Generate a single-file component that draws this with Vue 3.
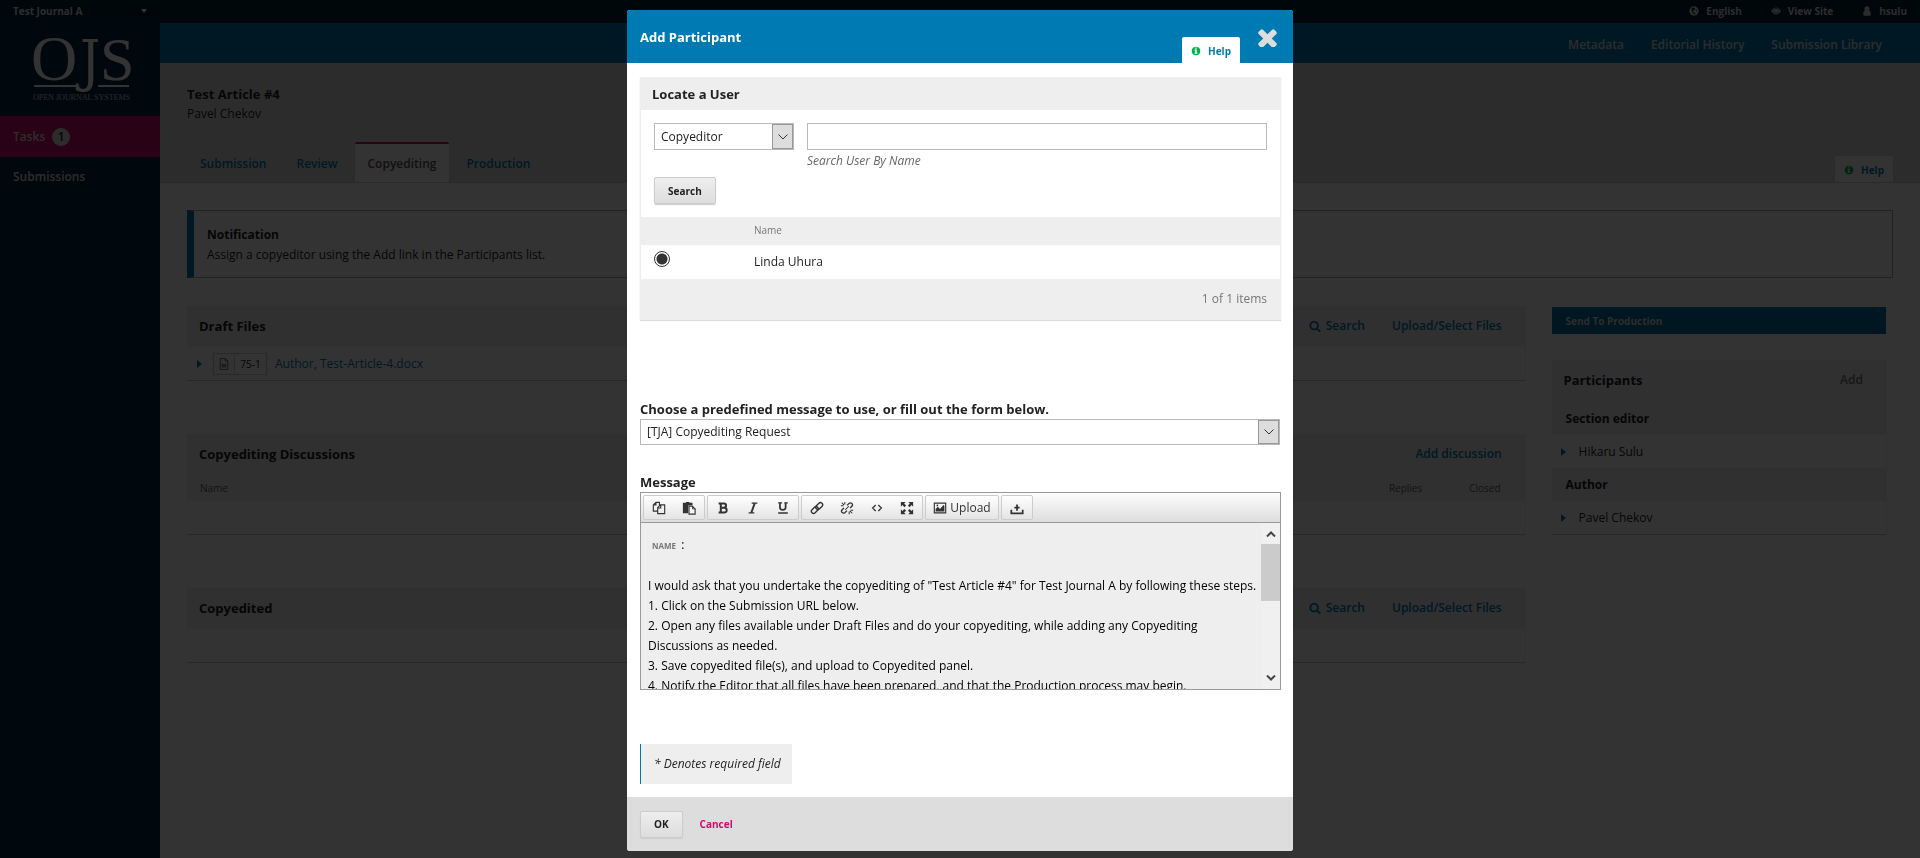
<script setup>
import { ref } from 'vue'

const icons = {
  times: 'M1490 1322q0 40-28 68l-136 136q-28 28-68 28t-68-28l-294-294-294 294q-28 28-68 28t-68-28l-136-136q-28-28-28-68t28-68l294-294-294-294q-28-28-28-68t28-68l136-136q28-28 68-28t68 28l294 294 294-294q28-28 68-28t68 28l136 136q28 28 28 68t-28 68l-294 294 294 294q28 28 28 68z',
  info: 'M1152 1376v-160q0-14-9-23t-23-9h-96v-512q0-14-9-23t-23-9h-320q-14 0-23 9t-9 23v160q0 14 9 23t23 9h96v320h-96q-14 0-23 9t-9 23v160q0 14 9 23t23 9h448q14 0 23-9t9-23zm-128-896v-160q0-14-9-23t-23-9h-192q-14 0-23 9t-9 23v160q0 14 9 23t23 9h192q14 0 23-9t9-23zm640 416q0 209-103 385.5t-279.5 279.5-385.5 103-385.5-103-279.5-279.5-103-385.5 103-385.5 279.5-279.5 385.5-103 385.5 103 279.5 279.5 103 385.5z',
  search: 'M1216 832q0-185-131.5-316.5t-316.5-131.5-316.5 131.5-131.5 316.5 131.5 316.5 316.5 131.5 316.5-131.5 131.5-316.5zm512 832q0 52-38 90t-90 38q-54 0-90-38l-343-342q-179 124-399 124-143 0-273.5-55.5t-225-150-150-225-55.5-273.5 55.5-273.5 150-225 225-150 273.5-55.5 273.5 55.5 225 150 150 225 55.5 273.5q0 220-124 399l343 343q37 37 37 90z'
}

const roles = ['Copyeditor']
const templates = ['[TJA] Copyediting Request']
const role = ref(roles[0])
const template = ref(templates[0])
const query = ref('')
const picked = ref('linda')

const steps = [
  'I would ask that you undertake the copyediting of "Test Article #4" for Test Journal A by following these steps.',
  '1. Click on the Submission URL below.',
  '2. Open any files available under Draft Files and do your copyediting, while adding any Copyediting Discussions as needed.',
  '3. Save copyedited file(s), and upload to Copyedited panel.',
  '4. Notify the Editor that all files have been prepared, and that the Production process may begin.'
]

const participants = [
  { role: 'Section editor', name: 'Hikaru Sulu' },
  { role: 'Author', name: 'Pavel Chekov' }
]
</script>

<template>
  <div class="app">
    <header class="topbar">
      <button type="button" class="journal">Test Journal A <i class="caret"></i></button>
      <nav class="usernav">
        <a href="#">
          <svg class="ic10" viewBox="0 0 16 16"><circle cx="8" cy="8" r="7.5" fill="currentColor" /><path d="M4 4l3-2 3 2-2 3-2 1 1 2 3 1-1 3-2-2-2-3zM11 4l2 3-1 2z" fill="#002c40" /></svg>English</a>
        <a href="#">
          <svg class="ic10" viewBox="0 0 16 16"><path d="M0 8q8-11 16 0-8 11-16 0z" fill="currentColor" /><circle cx="8" cy="7.500" r="3.800" fill="none" stroke="#002c40" stroke-width="1" /></svg>View Site</a>
        <a href="#">
          <svg class="ic10" viewBox="0 0 16 16"><circle cx="8" cy="4.500" r="4" fill="currentColor" /><path d="M2 13q0-6 3-6 3 2.500 6 0 3 0 3 6 0 2.500-2 2.500H4Q2 15.500 2 13z" fill="currentColor" /></svg>hsulu</a>
      </nav>
    </header>

    <div class="frame">
      <aside class="side">
        <a href="#" class="logo">
          <svg viewBox="0 0 96 66" role="img" aria-label="Open Journal Systems">
            <g fill="#fff">
              <text x="-2" y="44" font-family="Liberation Serif, serif" font-size="64">O</text>
              <text x="47" y="44" font-family="DejaVu Serif Condensed, DejaVu Serif, serif" font-size="56">J</text>
              <text x="67" y="44" font-family="Liberation Serif, serif" font-size="62">S</text>
              <path d="M1 49h43v2H1zM65 49h31v2H65z" />
              <text x="0" y="64" font-family="Liberation Serif, serif" font-size="8" opacity=".75">OPEN JOURNAL SYSTEMS</text>
            </g>
          </svg>
        </a>
        <a href="#" class="side-link tasks">Tasks <span class="count">1</span></a>
        <a href="#" class="side-link">Submissions</a>
      </aside>

      <main class="page">
        <nav class="pagenav">
          <a href="#">Metadata</a>
          <a href="#">Editorial History</a>
          <a href="#">Submission Library</a>
        </nav>
        <div class="title-area">
          <h1>Test Article #4</h1>
          <p>Pavel Chekov</p>
          <div class="tabrow">
            <nav class="tabs">
              <a href="#">Submission</a>
              <a href="#">Review</a>
              <a href="#" class="active">Copyediting</a>
              <a href="#">Production</a>
            </nav>
            <a href="#" class="help page-help"><svg class="ic10" viewBox="0 0 1792 1792"><path :d="icons.info" /></svg>Help</a>
          </div>
        </div>

        <div class="content">
          <section class="notice">
            <h2>Notification</h2>
            <p>Assign a copyeditor using the Add link in the Participants list.</p>
          </section>

          <div class="columns">
            <div class="grids">
              <section class="grid">
                <header class="grid-head">
                  <h3>Draft Files</h3>
                  <a href="#"><svg class="ic12" viewBox="0 0 1792 1792"><path :d="icons.search" /></svg>Search</a>
                  <a href="#">Upload/Select Files</a>
                </header>
                <div class="file">
                  <button type="button" class="tri" aria-label="Settings"></button>
                  <span class="badge">
                    <svg viewBox="0 0 12 14"><path d="M1.500.5h6l3 3v10h-9zM7.500.5v3h3M3.500 6.500l1 4.500 1.500-4 1.500 4 1-4.500" fill="none" stroke="#555" /></svg>
                    <b>75-1</b>
                  </span>
                  <a href="#">Author, Test-Article-4.docx</a>
                </div>
              </section>

              <section class="grid">
                <header class="grid-head">
                  <h3>Copyediting Discussions</h3>
                  <a href="#">Add discussion</a>
                </header>
                <div class="cols"><span class="grow">Name</span><span>Replies</span><span>Closed</span></div>
                <div class="blank"></div>
              </section>

              <section class="grid">
                <header class="grid-head">
                  <h3>Copyedited</h3>
                  <a href="#"><svg class="ic12" viewBox="0 0 1792 1792"><path :d="icons.search" /></svg>Search</a>
                  <a href="#">Upload/Select Files</a>
                </header>
                <div class="blank"></div>
              </section>
            </div>

            <aside class="right">
              <button type="button" class="send">Send To Production</button>
              <section class="grid people">
                <header class="grid-head"><h3>Participants</h3><a href="#" class="muted">Add</a></header>
                <template v-for="p in participants" :key="p.role">
                  <h4>{{ p.role }}</h4>
                  <div class="person"><button type="button" class="tri" aria-label="Settings"></button>{{ p.name }}</div>
                </template>
              </section>
            </aside>
          </div>
        </div>
      </main>
    </div>

    <div class="overlay">
      <div class="modal" role="dialog" aria-modal="true" aria-labelledby="modal-title">
        <header class="modal-head">
          <h2 id="modal-title">Add Participant</h2>
          <a href="#" class="help"><svg class="ic10" viewBox="0 0 1792 1792"><path :d="icons.info" /></svg>Help</a>
          <button type="button" class="close" aria-label="Close"><svg viewBox="290 290 1212 1212"><path :d="icons.times" /></svg></button>
        </header>

        <form class="modal-body" @submit.prevent>
          <section class="locate">
            <h3>Locate a User</h3>
            <div class="filters">
              <div class="select role">
                <select v-model="role" aria-label="Role"><option v-for="r in roles" :key="r">{{ r }}</option></select>
                <span class="drop"><svg viewBox="0 0 10 6"><path d="M.5.5L5 5 9.500.5" fill="none" stroke="#333" /></svg></span>
              </div>
              <div class="byname">
                <input id="user-name" v-model="query" type="text" />
                <label for="user-name">Search User By Name</label>
              </div>
            </div>
            <button type="button" class="btn search">Search</button>
            <table>
              <thead><tr><th class="pick"></th><th>Name</th></tr></thead>
              <tbody>
                <tr>
                  <td class="pick"><input id="linda" v-model="picked" type="radio" value="linda" /></td>
                  <td><label for="linda">Linda Uhura</label></td>
                </tr>
              </tbody>
            </table>
            <div class="paging">1 of 1 items</div>
          </section>

          <label class="field" for="tpl">Choose a predefined message to use, or fill out the form below.</label>
          <div class="select tpl">
            <select id="tpl" v-model="template"><option v-for="t in templates" :key="t">{{ t }}</option></select>
            <span class="drop"><svg viewBox="0 0 10 6"><path d="M.5.5L5 5 9.500.5" fill="none" stroke="#333" /></svg></span>
          </div>

          <span id="msg-label" class="field">Message</span>
          <div class="editor">
            <div class="toolbar">
              <div class="group">
                <button type="button" aria-label="Copy"><svg viewBox="0 0 16 16"><path d="M6.500 11.500h-5v-7l3-3h4V5M4.500 1.500v3h-3M6.500 7.500l3-3h5v10h-8zM10 4.500v3.500H6.500" fill="none" stroke="#333" stroke-width="1.300" /></svg></button>
                <button type="button" aria-label="Paste"><svg viewBox="0 0 16 16"><path d="M1 2h3.500V1h4v1H12v3H7v9H1z" fill="#333" /><path d="M8 6h4l3 3v6H8z" fill="#f5f5f5" stroke="#333" stroke-width="1.300" /><path d="M12 6v3h3" fill="none" stroke="#333" /></svg></button>
              </div>
              <div class="group">
                <button type="button" aria-label="Bold"><svg viewBox="0 0 16 16"><path d="M3 2.800h6q2.500 0 2.500 2.400T9 7.700H5M9 7.700q3.200 0 3.200 2.800T9 13.200H3M5.500 3v10" fill="none" stroke="#333" stroke-width="2.300" /></svg></button>
                <button type="button" aria-label="Italic"><svg viewBox="0 0 16 16"><path d="M6.500 2.500h6.500M3 13.500h6.500" fill="none" stroke="#333" stroke-width="1.400" /><path d="M10 2.500L6 13.500" fill="none" stroke="#333" stroke-width="2.200" /></svg></button>
                <button type="button" aria-label="Underline"><svg viewBox="0 0 16 16"><path d="M4.500 2v5q0 3.200 3.300 3.200T11 7V2" fill="none" stroke="#333" stroke-width="2" /><path d="M2.500 2.200H7M9.500 2.200h4M2.500 13.700h11" fill="none" stroke="#333" stroke-width="1.500" /></svg></button>
              </div>
              <div class="group">
                <button type="button" aria-label="Link"><svg viewBox="0 0 16 16"><g fill="none" stroke="#333" stroke-width="1.600"><rect x="6" y="3.300" width="9" height="5" rx="2.500" transform="rotate(-45 10.500 5.800)" /><rect x="1" y="7.800" width="9" height="5" rx="2.500" transform="rotate(-45 5.500 10.300)" /></g></svg></button>
                <button type="button" aria-label="Remove link"><svg viewBox="0 0 16 16"><g fill="none" stroke="#333" stroke-width="1.500"><path d="M8 5l2.500-2.500q1.500-1 3 .3t.3 3L11.500 8M8 11l-2.500 2.500q-1.500 1-3-.3t-.3-3L4.500 8" /><path d="M5.500 1v3M1 5.500h3M2 2l2.500 2.500M10.500 12v3M12 10.500h3M11.500 11.500L14 14M6 10l4-4" stroke-width="1.200" /></g></svg></button>
                <button type="button" aria-label="Source"><svg viewBox="0 0 16 16"><path d="M6.500 4.500L3 8l3.500 3.500M9.500 4.500L13 8l-3.500 3.500" fill="none" stroke="#333" stroke-width="1.500" /></svg></button>
                <button type="button" aria-label="Fullscreen"><svg viewBox="0 0 16 16"><path d="M1 1h5.500L4.700 2.800 7 5 5 7 2.800 4.700 1 6.500zM15 1v5.500l-1.800-1.800L11 7 9 5l2.300-2.200L9.500 1zM1 15V9.500l1.800 1.800L5 9l2 2-2.300 2.200L6.500 15zM15 15H9.500l1.800-1.800L9 11l2-2 2.200 2.300L15 9.500z" fill="#333" /></svg></button>
              </div>
              <div class="group">
                <button type="button" class="upload"><svg viewBox="0 0 16 16"><path d="M1.500 2.500h13v11h-13z" fill="none" stroke="#333" stroke-width="1.300" /><path d="M3 12V9l2.500-2.500L8 9l4-4.500 1 1V12z" fill="#333" /><circle cx="5" cy="5" r="1" fill="#333" /></svg>Upload</button>
              </div>
              <div class="group">
                <button type="button" aria-label="Download"><svg viewBox="0 0 16 16"><path d="M1.500 10v4h13v-4M8 4v7M5 7.500h6" fill="none" stroke="#333" stroke-width="2" /></svg></button>
              </div>
            </div>
            <div class="edit-area">
              <div class="text" contenteditable="true" role="textbox" aria-labelledby="msg-label">
                <p class="greet"><span class="tag">NAME</span> :</p>
                <p v-for="s in steps" :key="s">{{ s }}</p>
              </div>
              <div class="scroll">
                <svg viewBox="0 0 10 6"><path d="M1 5.500l4-4 4 4" fill="none" stroke="#444" stroke-width="2" /></svg>
                <i class="thumb"></i>
                <svg viewBox="0 0 10 6"><path d="M1 .5l4 4 4-4" fill="none" stroke="#444" stroke-width="2" /></svg>
              </div>
            </div>
          </div>

          <p class="required">* Denotes required field</p>
        </form>

        <footer class="modal-foot">
          <button type="button" class="btn">OK</button>
          <a href="#">Cancel</a>
        </footer>
      </div>
    </div>
  </div>
</template>

<style>
body { margin: 0; background: #fff; overflow: hidden; }
</style>

<style scoped>
.app {
  min-height: 100vh;
  display: flex;
  flex-direction: column;
  font: 12px/20px "Open Sans", "Noto Sans", sans-serif;
  color: #222;
}
.app *, .app *::before { box-sizing: border-box; }
h1, h2, h3, h4, p { margin: 0; font-size: 13px; line-height: 20px; }
p { font-size: 12px; }
a { color: #007ab2; text-decoration: none; }
button, input, select { font: inherit; color: inherit; margin: 0; }
svg { display: block; fill: currentColor; }
.ic10 { width: 10px; height: 10px; flex: none; }
.ic12 { width: 12px; height: 12px; flex: none; }

.topbar {
  display: flex;
  justify-content: space-between;
  align-items: center;
  height: 23px;
  padding: 0 13px 2px;
  background: #002435;
  font-size: 10px;
  font-weight: 700;
  color: #ddd;
}
.journal {
  display: flex;
  align-items: center;
  justify-content: space-between;
  width: 134px;
  padding: 0;
  border: 0;
  background: none;
}
.caret { border: 3px solid transparent; border-top: 4px solid #fff; border-bottom: 0; }
.usernav { display: flex; gap: 29px; }
.usernav a { display: flex; align-items: center; gap: 7px; color: #ddd; }

.frame { flex: 1; display: flex; }
.side { width: 160px; flex: none; background: #002c40; }
.logo { display: block; padding: 13px 31px 14px 33px; height: 93px; }
.logo svg { overflow: visible; }
.side-link {
  display: flex;
  align-items: center;
  gap: 7px;
  height: 40px;
  padding: 0 13px;
  color: #ddd;
  font-weight: 600;
}
.side-link.tasks { height: 41px; background: #d00a6c; }
.count {
  width: 18px;
  height: 18px;
  border-radius: 9px;
  background: #ddd;
  color: #222;
  text-align: center;
  line-height: 18px;
}

.page { flex: 1; min-width: 0; }
.pagenav {
  display: flex;
  justify-content: flex-end;
  align-items: center;
  gap: 27px;
  height: 40px;
  padding: 4px 38px 0;
  background: #007ab2;
  font-weight: 600;
}
.pagenav a { color: #ddd; }
.title-area { background: #ddd; padding: 21px 27px 0; border-bottom: 1px solid #d0d0d0; }
.tabrow { display: flex; justify-content: space-between; align-items: flex-end; margin-top: 18px; }
.tabs { display: flex; gap: 4px; font-weight: 600; }
.tabs a { height: 40px; padding: 12px 13px 0; }
.tabs .active {
  padding-top: 10px;
  border-top: 2px solid #d00a6c;
  border-radius: 2px 2px 0 0;
  background: #fff;
  color: #555;
}
.help {
  display: flex;
  align-items: center;
  gap: 7px;
  height: 26px;
  padding: 1px 9px 0;
  border-radius: 2px 2px 0 0;
  background: #fff;
  font-size: 10px;
  font-weight: 700;
}
.help svg { color: #00b24e; }

.content { padding: 27px; }
.notice {
  padding: 14px 13px;
  height: 68px;
  border: 1px solid #aaa;
  border-left: 7px solid #007ab2;
}
.notice h2 { font-size: 12px; }
.columns {
  display: grid;
  grid-template-columns: 4fr 1fr;
  gap: 27px;
  padding: 28px 7px 0 0;
}
.grids { display: flex; flex-direction: column; gap: 53px; }
.grid { border-bottom: 1px solid #c8c8c8; box-shadow: 1px 0 1px #eee; }
.grid-head {
  display: flex;
  align-items: center;
  gap: 27px;
  height: 41px;
  padding: 0 23px 2px 12px;
  background: #eee;
}
.grid-head h3 { flex: 1; }
.grid-head a { display: flex; align-items: center; gap: 5px; font-weight: 600; }
.grid-head .muted { color: #777; }
.file { display: flex; align-items: center; height: 33px; padding-left: 10px; }
.tri {
  width: 5px;
  height: 8px;
  padding: 0;
  border: 4px solid transparent;
  border-left: 5px solid #007ab2;
  border-right: 0;
  background: none;
}
.badge {
  display: flex;
  align-items: center;
  width: 54px;
  height: 22px;
  margin: 0 8px 0 11px;
  border: 1px solid #ccc;
}
.badge svg { width: 20px; height: 12px; }
.badge b { flex: 1; border-left: 1px solid #ccc; text-align: center; font-size: 10px; font-weight: 400; }
.cols { display: flex; gap: 47px; height: 26px; padding: 3px 24px 0 13px; background: #eee; font-size: 10px; color: #666; }
.grow { flex: 1; }
.blank { height: 33px; }
.right { padding-top: 1px; }
.send {
  display: block;
  width: 100%;
  height: 27px;
  padding: 0 14px;
  border: 0;
  background: linear-gradient(#007ab2, #00699b);
  color: #ddd;
  font-size: 10px;
  font-weight: 700;
  text-align: left;
}
.people { margin-top: 26px; }
.people .grid-head { height: 42px; }
.people h4 { height: 33px; padding: 7px 14px 0; background: #eee; font-size: 12px; }
.person { display: flex; align-items: center; gap: 13px; height: 33px; padding: 0 0 0 9px; }

.overlay {
  position: fixed;
  inset: 0;
  padding: 10px;
  background: rgba(0, 0, 0, .8);
  overflow: hidden;
}
.modal { max-width: 666px; margin: 0 auto; border-radius: 3px; background: #fff; overflow: hidden; }
.modal-head {
  display: flex;
  align-items: flex-end;
  height: 53px;
  padding: 0 16px 0 13px;
  background: #007ab2;
  color: #fff;
}
.modal-head h2 { flex: 1; align-self: center; }
.close { width: 19px; height: 19px; margin: 0 0 16px 18px; padding: 0; border: 0; background: none; color: #ddd; }
.modal-body { padding: 14px 12px 13px 13px; }
.locate { margin-bottom: 79px; border: 1px solid #eee; border-top: 0; box-shadow: 0 1px 1px #ddd; }
.locate h3 { height: 33px; padding: 7px 11px; background: #eee; }
.filters { display: flex; gap: 13px; padding: 13px 13px 0; }
.select { position: relative; height: 27px; }
.select select {
  width: 100%;
  height: 100%;
  padding: 0 24px 0 6px;
  border: 1px solid #b8b8b8;
  border-radius: 0;
  background: #fff;
  appearance: none;
}
.select.role { width: 140px; flex: none; }
.select.tpl { height: 26px; margin: 0 1px 27px 0; }
.drop {
  position: absolute;
  top: 1px;
  right: 1px;
  bottom: 1px;
  width: 21px;
  display: grid;
  place-items: center;
  border: 1px solid #999;
  background: #ddd;
  pointer-events: none;
}
.drop svg { width: 10px; height: 6px; }
.byname { flex: 1; display: flex; flex-direction: column; }
.byname input { width: 100%; height: 27px; padding: 0 6px; border: 1px solid #b8b8b8; }
.byname label { margin-top: 1px; color: #666; font-style: italic; }
.btn {
  height: 27px;
  padding: 0 13px;
  border: 1px solid #ccc;
  border-radius: 2px;
  background: linear-gradient(#eee, #ddd);
  box-shadow: 0 1px 1px #ccc;
  font-size: 10px;
  font-weight: 700;
}
.search { margin: 6px 13px 13px; }
table { width: 100%; border-collapse: collapse; }
th { height: 28px; padding: 0 0 2px; background: #eee; font-size: 10px; font-weight: 400; color: #777; text-align: left; }
td { height: 34px; padding: 0; }
th.pick, td.pick { width: 113px; padding-left: 13px; }
td input {
  display: block;
  width: 16px;
  height: 16px;
  margin: 0 0 6px;
  appearance: none;
  border: 1px solid #333;
  border-radius: 8px;
  background: radial-gradient(#333 5px, #fff 6px);
}
.paging { height: 40px; padding: 10px 13px; background: #eee; color: #777; text-align: right; }
.field { display: block; height: 20px; font-size: 13px; font-weight: 700; }
.editor { border: 1px solid #999; }
.toolbar {
  display: flex;
  gap: 2px;
  height: 30px;
  padding: 2px;
  border-bottom: 1px solid #999;
  background: linear-gradient(#fdfdfd, #ddd);
}
.group { display: flex; height: 25px; border: 1px solid #ccc; border-radius: 2px; background: linear-gradient(#fff, #e4e4e4); }
.group button { display: flex; align-items: center; justify-content: center; width: 30px; height: 23px; padding: 0; border: 0; background: none; color: #333; }
.group svg { width: 14px; height: 14px; }
.group .upload { width: 72px; gap: 3px; }
.edit-area { display: flex; height: 166px; background: #eee; }
.text { flex: 1; min-width: 0; height: 166px; padding: 12px 0 0 7px; overflow: hidden; color: #000; outline: 0; }
.greet { margin-bottom: 20px; padding-left: 4px; }
.tag { margin-right: 2px; font-size: 8px; font-weight: 700; color: #777; }
.scroll { display: flex; flex-direction: column; align-items: center; flex: none; width: 19px; padding: 8px 0; background: #f0f0f0; }
.scroll svg { width: 10px; height: 6px; }
.thumb { width: 100%; height: 57px; margin: 7px 0 auto; background: #cbcbcb; }
.required { width: max-content; height: 40px; margin-top: 54px; padding: 10px 11px 10px 13px; border-left: 1px solid #007ab2; background: #eee; font-style: italic; }
.modal-foot { display: flex; align-items: center; gap: 17px; height: 54px; padding: 0 13px; background: #ddd; }
.modal-foot a { color: #d00a6c; font-size: 10px; font-weight: 700; }
</style>
